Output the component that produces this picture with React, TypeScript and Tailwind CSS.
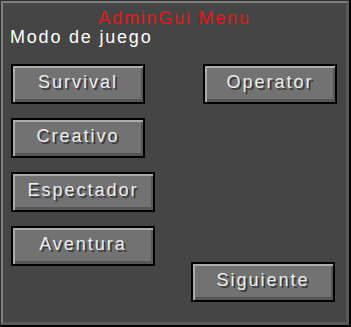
import type { ReactNode } from "react";

const McButton = ({ children, w, h = "h-10" }: { children: ReactNode; w: string; h?: string }) => (
  <button
    className={`${w} ${h} flex items-center justify-center border-2 border-black bg-[#727272] shadow-[inset_2px_2px_0_#ababab,inset_-2px_-3px_0_#565656] text-[18px] tracking-[2px] text-[#ececec] [text-shadow:2px_2px_0_#3a3a3a] pb-1`}
  >
    {children}
  </button>
);

export default function App() {
  return (
    <div
      className="w-[351px] h-[327px] border-l border-t border-[#2e2e2e] border-r-2 border-b-2 border-r-black border-b-black"
      style={{ fontFamily: '"Liberation Sans", Arial, sans-serif' }}
    >
      <div className="h-full flex flex-col bg-[#454545] border-l-2 border-t-2 border-[#7f7f7f] border-r-[3px] border-b-[3px] border-r-[#585858] border-b-[#585858]">
        <div className="text-center text-[18px] leading-[18px] tracking-[1.8px] text-[#e51717] mt-[6px]">AdminGui Menu</div>
        <div className="ml-[7px] text-[18px] leading-[18px] tracking-[1.8px] text-white mt-[1px]">Modo de juego</div>
        <div className="flex flex-1 mt-[18px] pl-[8px] pb-[20px]">
          <div className="flex flex-col gap-[14px]">
            <McButton w="w-[134px]">Survival</McButton>
            <McButton w="w-[134px]">Creativo</McButton>
            <McButton w="w-[144px]">Espectador</McButton>
            <McButton w="w-[144px]">Aventura</McButton>
          </div>
          <div className="flex flex-col flex-1 items-end pr-[9px]">
            <McButton w="w-[134px]">Operator</McButton>
            <div className="mt-auto mr-[2px]">
              <McButton w="w-[144px]">Siguiente</McButton>
            </div>
          </div>
        </div>
      </div>
    </div>
  );
}
